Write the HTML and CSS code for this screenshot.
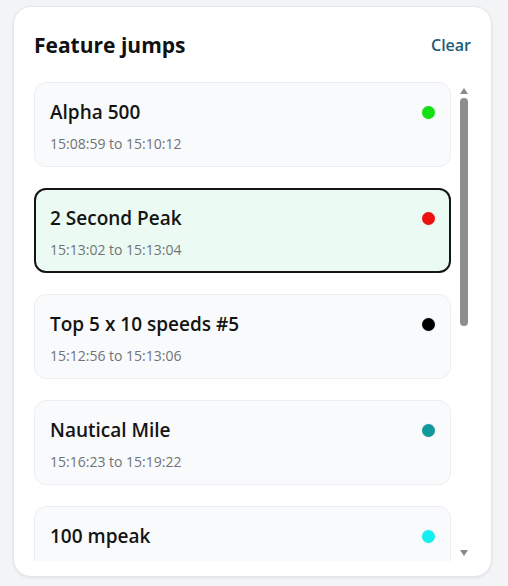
FILE: index.html
```html
<!DOCTYPE html>
<html lang="en">
<head>
    <meta charset="UTF-8">
    <meta name="viewport" content="width=device-width, initial-scale=1.0">
    <title>Feature jumps</title>
    <link rel="stylesheet" href="styles.css">
</head>
<body>
    <div class="panel">
        <div class="panel-head">
            <h2>Feature jumps</h2>
            <a class="clear-link" href="#">Clear</a>
        </div>

        <!-- List of jumps with its scrollbar -->
        <div class="list-wrap">
            <div class="jump-list">
                <div class="jump">
                    <div class="jump-top">
                        <span class="jump-name">Alpha 500</span>
                        <span class="dot" style="background-color: #11e011;"></span>
                    </div>
                    <div class="jump-time">15:08:59 to 15:10:12</div>
                </div>
                <div class="jump selected">
                    <div class="jump-top">
                        <span class="jump-name">2 Second Peak</span>
                        <span class="dot" style="background-color: #ee1111;"></span>
                    </div>
                    <div class="jump-time">15:13:02 to 15:13:04</div>
                </div>
                <div class="jump">
                    <div class="jump-top">
                        <span class="jump-name">Top 5 x 10 speeds #5</span>
                        <span class="dot" style="background-color: #000000;"></span>
                    </div>
                    <div class="jump-time">15:12:56 to 15:13:06</div>
                </div>
                <div class="jump">
                    <div class="jump-top">
                        <span class="jump-name">Nautical Mile</span>
                        <span class="dot" style="background-color: #10999b;"></span>
                    </div>
                    <div class="jump-time">15:16:23 to 15:19:22</div>
                </div>
                <div class="jump">
                    <div class="jump-top">
                        <span class="jump-name">100 mpeak</span>
                        <span class="dot" style="background-color: #14f0f2;"></span>
                    </div>
                </div>
            </div>
            <div class="scrollbar">
                <span class="arrow-up"></span>
                <span class="thumb"></span>
                <span class="track"></span>
                <span class="arrow-down"></span>
            </div>
        </div>
    </div>
</body>
</html>
```

FILE: styles.css
```css
* {
    box-sizing: border-box;
}
body {
    margin: 0;
    padding: 6px 16px 9px 13px;
    background-color: #f3f4f6;
    font-family: "Open Sans", "Noto Sans", sans-serif;
    color: #141414;
}
.panel {
    height: 571px;
    background-color: #fff;
    border: 1px solid #e4e6ea;
    border-radius: 18px;
    box-shadow: 0 1px 3px rgba(0, 0, 0, 0.08);
    padding: 23px 19px 16px 20px;
}
.panel-head {
    display: flex;
    justify-content: space-between;
    align-items: center;
    height: 30px;
}
.panel-head h2 {
    margin: 0;
    font-size: 21px;
    font-weight: 700;
    color: #111;
}
.clear-link {
    font-size: 16px;
    font-weight: 600;
    color: #1f5c78;
    text-decoration: none;
    margin-right: 1px;
}
.list-wrap {
    display: flex;
    margin-top: 22px;
    height: 479px;
}
.jump-list {
    flex: 1;
    overflow: hidden;
    display: flex;
    flex-direction: column;
    gap: 21px;
}
.jump {
    flex-shrink: 0;
    height: 85px;
    background-color: #f9fafb;
    border: 1px solid #eceef1;
    border-radius: 12px;
    padding: 15px 16px 0 15px;
}
.jump.selected {
    background-color: #ebfbf3;
    border: 2px solid #151515;
    padding: 14px 15px 0 14px;
}
.jump-top {
    display: flex;
    justify-content: space-between;
    align-items: center;
    height: 28px;
}
.jump-name {
    font-size: 19px;
    font-weight: 600;
}
.dot {
    width: 13px;
    height: 13px;
    border-radius: 50%;
    margin-right: -1px;
    box-shadow: 0 0 2px rgba(0, 0, 0, 0.12);
}
.jump-time {
    margin-top: 8px;
    font-size: 14px;
    line-height: 20px;
    color: #707378;
}
.scrollbar {
    width: 17px;
    margin-left: 4px;
    display: flex;
    flex-direction: column;
    align-items: center;
}
.arrow-up, .arrow-down {
    width: 0;
    height: 0;
    border-left: 4px solid transparent;
    border-right: 4px solid transparent;
}
.arrow-up {
    margin-top: 6px;
    border-bottom: 6px solid #8a8a8a;
}
.arrow-down {
    margin-bottom: 5px;
    border-top: 6px solid #8a8a8a;
}
.thumb {
    width: 8px;
    height: 228px;
    margin-top: 4px;
    border-radius: 4px;
    background-color: #8e8e8e;
}
.track {
    flex: 1;
}
```
